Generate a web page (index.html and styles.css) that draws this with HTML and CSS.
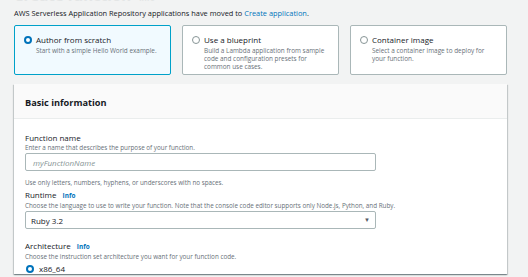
FILE: index.html
```html
<!DOCTYPE html>
<html lang="en">
  <head>
    <meta charset="UTF-8">
    <title>Create function</title>
    <link rel="stylesheet" href="styles.css">
  </head>
  <body>
    <div class="page">
      <h1 class="titre">Create function <span class="info">Info</span></h1>
      <p class="avis">AWS Serverless Application Repository applications have moved to <a href="#">Create application</a>.</p>
      <div class="tuiles">
        <div class="tuile tuile-active">
          <span class="radio radio-on"></span>
          <div class="tuile-texte">
            <div class="tuile-titre">Author from scratch</div>
            <div class="tuile-desc">Start with a simple Hello World example.</div>
          </div>
        </div>
        <div class="tuile">
          <span class="radio"></span>
          <div class="tuile-texte">
            <div class="tuile-titre">Use a blueprint</div>
            <div class="tuile-desc">Build a Lambda application from sample code and configuration presets for common use cases.</div>
          </div>
        </div>
        <div class="tuile">
          <span class="radio"></span>
          <div class="tuile-texte">
            <div class="tuile-titre">Container image</div>
            <div class="tuile-desc">Select a container image to deploy for your function.</div>
          </div>
        </div>
      </div>
      <div class="carte">
        <div class="carte-entete">Basic information</div>
        <div class="carte-corps">
          <div class="champ champ-nom">
            <div class="label">Function name</div>
            <div class="aide">Enter a name that describes the purpose of your function.</div>
            <div class="saisie"><span class="placeholder">myFunctionName</span></div>
            <div class="aide aide-bas">Use only letters, numbers, hyphens, or underscores with no spaces.</div>
          </div>
          <div class="champ">
            <div class="label">Runtime <span class="info">Info</span></div>
            <div class="aide">Choose the language to use to write your function. Note that the console code editor supports only Node.js, Python, and Ruby.</div>
            <div class="saisie select"><span>Ruby 3.2</span><span class="fleche">&#9660;</span></div>
          </div>
          <div class="champ">
            <div class="label">Architecture <span class="info">Info</span></div>
            <div class="aide">Choose the instruction set architecture you want for your function code.</div>
            <div class="option"><span class="radio radio-on"></span>x86_64</div>
          </div>
        </div>
      </div>
    </div>
  </body>
</html>
```

FILE: styles.css
```css
body {
  margin: 0;
  background: #f2f3f3;
  font-family: "Open Sans", "Liberation Sans", sans-serif;
  color: #16191f;
}
.page {
  padding: 0 21px 0 14px;
}
.titre {
  margin: -13px 0 0;
  font-size: 15px;
  font-weight: 700;
  color: #e4e6e6;
  line-height: 17px;
}
.titre .info {
  font-size: 8px;
  color: #e4e6e6;
}
.avis {
  margin: 2px 0 0;
  font-size: 7.4px;
  line-height: 10px;
  color: #16191f;
}
.avis a {
  color: #0073bb;
  text-decoration: none;
}
.tuiles {
  display: grid;
  grid-template-columns: repeat(3, 1fr);
  gap: 11px;
  margin-top: 7px;
}
.tuile {
  display: flex;
  gap: 4px;
  height: 50px;
  box-sizing: border-box;
  padding: 7px 10px 7px 9px;
  background: #fff;
  border: 1px solid #aab7b8;
  border-radius: 2px;
}
.tuile-active {
  background: #f1faff;
  border-color: #00a1c9;
}
.radio {
  flex: none;
  width: 8px;
  height: 8px;
  box-sizing: border-box;
  margin-top: 3px;
  border: 1px solid #879596;
  border-radius: 50%;
  background: #fff;
}
.radio-on {
  border: 2.5px solid #0073bb;
}
.tuile-titre {
  font-size: 8px;
  line-height: 13px;
  margin-bottom: 1px;
}
.tuile-desc {
  font-size: 6.4px;
  line-height: 8px;
  color: #687078;
}
.carte {
  margin-top: 9px;
  background: #fff;
  box-shadow: 0 1px 1px 0 rgba(0,28,36,0.3), 1px 1px 1px 0 rgba(0,28,36,0.15), -1px 1px 1px 0 rgba(0,28,36,0.15);
}
.carte-entete {
  height: 35px;
  box-sizing: border-box;
  padding: 13px 11px 0;
  background: #fafafa;
  border-bottom: 1px solid #eaeded;
  font-size: 9.2px;
  line-height: 12px;
  font-weight: 700;
}
.carte-corps {
  padding: 14px 11px 0;
}
.champ {
  margin-bottom: 12px;
}
.champ-nom {
  margin-bottom: 3px;
}
.label {
  font-size: 8px;
  line-height: 10px;
}
.info {
  margin-left: 4px;
  font-size: 6.4px;
  font-weight: 700;
  color: #0073bb;
}
.aide {
  font-size: 6.3px;
  line-height: 9px;
  color: #687078;
}
.aide-bas {
  margin-top: 7px;
}
.saisie {
  width: 351px;
  height: 18px;
  box-sizing: border-box;
  margin-top: 1px;
  padding: 0 7px;
  display: flex;
  align-items: center;
  border: 1px solid #aab7b8;
  border-radius: 2px;
  background: #fff;
  font-size: 8px;
}
.placeholder {
  font-style: italic;
  color: #879596;
}
.select {
  justify-content: space-between;
  padding: 0 5px;
}
.fleche {
  font-size: 6px;
  color: #545b64;
}
.option {
  display: flex;
  align-items: center;
  gap: 5px;
  margin-top: 2px;
  margin-left: 1px;
  font-size: 8px;
}
.option .radio {
  margin-top: 0;
}
```
